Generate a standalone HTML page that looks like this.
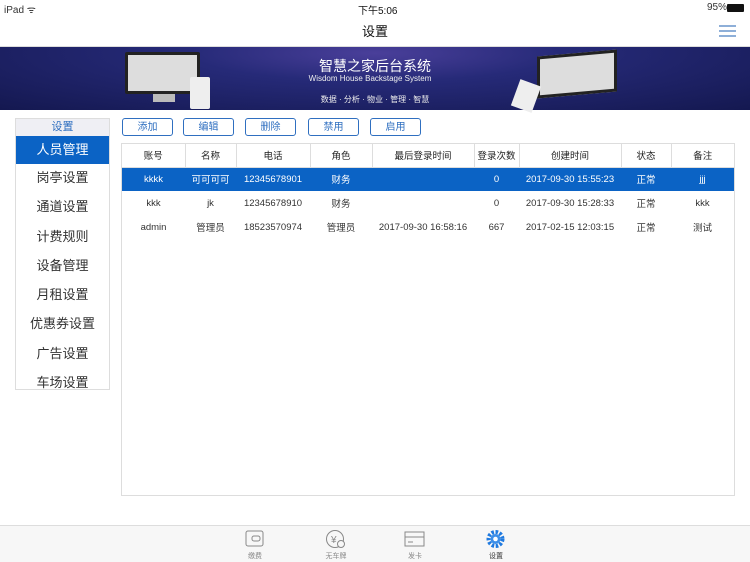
<!DOCTYPE html>
<html><head><meta charset="utf-8"><style>
*{margin:0;padding:0;box-sizing:border-box}
body{width:750px;height:562px;background:#fff;font-family:"Liberation Sans","Noto Sans CJK SC",sans-serif;position:relative;overflow:hidden;color:#333}
.abs{position:absolute}
.status{top:0;left:0;width:750px;height:16px;font-size:10px}
.nav{top:16px;left:0;width:750px;height:31px;text-align:center;font-size:13px;line-height:31px;color:#111}
.banner{top:47px;left:0;width:750px;height:63px;background:radial-gradient(ellipse at 50% 10%,#4a3f9a 0%,#262a78 35%,#141850 100%)}
.side{left:15px;top:118px;width:95px;height:272px;border:1px solid #ddd;overflow:hidden}
.side .h{height:17px;background:#efeff4;text-align:center;font-size:11px;color:#2f6fc0;line-height:17px}
.side .it{height:29.3px;text-align:center;font-size:13px;line-height:28px;color:#333}
.side .sel{background:#0b63c5;color:#fff;height:28px}
.btn{top:118px;height:18px;width:51px;border:1px solid #2f6fc0;border-radius:3px;font-size:10px;color:#2f6fc0;text-align:center;line-height:17px}
.tbl{left:121px;top:143px;width:614px;height:353px;border:1px solid #ddd}
table{border-collapse:collapse;width:612px;font-size:9.5px;table-layout:fixed}
td{height:24px;text-align:center;white-space:nowrap;overflow:hidden}
tr.hd td{border-right:1px solid #ddd;border-bottom:1px solid #ddd;color:#222;height:23px}
tr.hd td:last-child{border-right:none}
tr.s td{background:#0b63c5;color:#fff}
.tab{top:525px;left:0;width:750px;height:37px;background:#f7f7f7;border-top:1px solid #ddd}
.ti{top:529px;width:40px;text-align:center;font-size:7px;color:#888}
</style></head><body>
<div class="abs status"><span class="abs" style="left:4px;top:2px">iPad ᯤ</span><span class="abs" style="left:358px;top:2px;color:#111">下午5:06</span><span class="abs" style="left:707px;top:2px">95%</span><span class="abs" style="left:727px;top:4px;width:17px;height:8px;background:#111;border-radius:1px"></span></div>
<div class="abs nav">设置</div>
<svg class="abs" style="left:719px;top:24px" width="17" height="14"><g stroke="#4a7fc0" stroke-width="1.3"><line x1="0" y1="2" x2="17" y2="2"/><line x1="0" y1="7" x2="17" y2="7"/><line x1="0" y1="12" x2="17" y2="12"/></g></svg>
<div class="abs" style="top:46px;left:0;width:750px;height:1px;background:#ddd"></div>
<div class="abs banner">
<div class="abs" style="left:125px;top:5px;width:75px;height:42px;background:#ddd;border:3px solid #222;border-radius:2px"></div>
<div class="abs" style="left:153px;top:47px;width:22px;height:8px;background:#bbb"></div>
<div class="abs" style="left:190px;top:30px;width:20px;height:32px;background:#eee;border-radius:2px"></div>
<div class="abs" style="left:537px;top:6px;width:80px;height:42px;background:#ddd;border:3px solid #222;transform:skewY(-5deg)"></div>
<div class="abs" style="left:515px;top:35px;width:22px;height:28px;background:#eee;transform:rotate(20deg)"></div>
<div class="abs" style="left:290px;top:9px;width:170px;text-align:center;color:#fff;font-size:14px">智慧之家后台系统</div>
<div class="abs" style="left:280px;top:27px;width:180px;text-align:center;color:#eee;font-size:8px">Wisdom House Backstage System</div>
<div class="abs" style="left:290px;top:47px;width:170px;text-align:center;color:#eee;font-size:8px">数据 · 分析 · 物业 · 管理 · 智慧</div>
</div>
<div class="abs side"><div class="h">设置</div><div class="it sel">人员管理</div><div class="it">岗亭设置</div><div class="it">通道设置</div><div class="it">计费规则</div><div class="it">设备管理</div><div class="it">月租设置</div><div class="it">优惠券设置</div><div class="it">广告设置</div><div class="it">车场设置</div></div>
<div class="abs btn" style="left:122px">添加</div><div class="abs btn" style="left:183px">编辑</div><div class="abs btn" style="left:245px">删除</div><div class="abs btn" style="left:308px">禁用</div><div class="abs btn" style="left:370px">启用</div>
<div class="abs tbl"><table>
<colgroup><col style="width:63px"><col style="width:51px"><col style="width:74px"><col style="width:62px"><col style="width:102px"><col style="width:45px"><col style="width:102px"><col style="width:50px"><col style="width:63px"></colgroup>
<tr class="hd"><td>账号</td><td>名称</td><td>电话</td><td>角色</td><td>最后登录时间</td><td>登录次数</td><td>创建时间</td><td>状态</td><td>备注</td></tr>
<tr class="s"><td>kkkk</td><td>可可可可</td><td>12345678901</td><td>财务</td><td></td><td>0</td><td>2017-09-30 15:55:23</td><td>正常</td><td>jjj</td></tr>
<tr><td>kkk</td><td>jk</td><td>12345678910</td><td>财务</td><td></td><td>0</td><td>2017-09-30 15:28:33</td><td>正常</td><td>kkk</td></tr>
<tr><td>admin</td><td>管理员</td><td>18523570974</td><td>管理员</td><td>2017-09-30 16:58:16</td><td>667</td><td>2017-02-15 12:03:15</td><td>正常</td><td>测试</td></tr>
</table></div>
<div class="abs tab"></div>
<svg class="abs" style="left:245px;top:530px" width="20" height="18"><rect x="1" y="1" width="17" height="15" rx="2" fill="none" stroke="#888"/><rect x="7" y="6" width="8" height="5" rx="2" fill="none" stroke="#888"/></svg>
<svg class="abs" style="left:325px;top:529px" width="22" height="20"><circle cx="10" cy="10" r="8.5" fill="none" stroke="#888"/><text x="6" y="14" font-size="10" fill="#888">¥</text><circle cx="16" cy="15" r="3.5" fill="#f7f7f7" stroke="#888"/></svg>
<svg class="abs" style="left:404px;top:531px" width="22" height="16"><rect x="1" y="1" width="19" height="14" fill="none" stroke="#888"/><line x1="1" y1="6" x2="20" y2="6" stroke="#888"/><line x1="4" y1="11" x2="9" y2="11" stroke="#888"/></svg>
<svg class="abs" style="left:485px;top:529px" width="21" height="20"><circle cx="10.5" cy="10" r="7" fill="none" stroke="#1f7ae0" stroke-width="4" stroke-dasharray="2.5 1.6"/><circle cx="10.5" cy="10" r="5" fill="#3d8fe8"/><circle cx="10.5" cy="10" r="2.3" fill="#fff"/></svg>
<div class="abs ti" style="left:235px;top:551px">缴费</div><div class="abs ti" style="left:316px;top:551px">无车牌</div><div class="abs ti" style="left:395px;top:551px">发卡</div><div class="abs ti" style="left:476px;top:551px;color:#333">设置</div>
</body></html>
